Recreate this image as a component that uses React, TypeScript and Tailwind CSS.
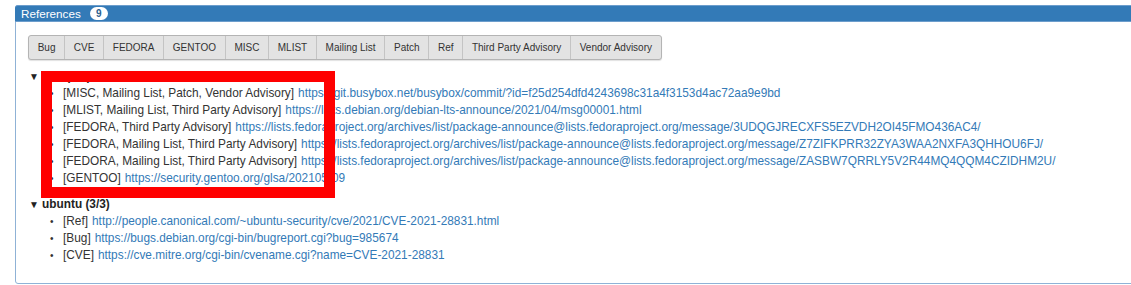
import React from "react";

const buttons = ["Bug", "CVE", "FEDORA", "GENTOO", "MISC", "MLIST", "Mailing List", "Patch", "Ref", "Third Party Advisory", "Vendor Advisory"];

const nvd: [string, string][] = [
  ["MISC, Mailing List, Patch, Vendor Advisory", "https://git.busybox.net/busybox/commit/?id=f25d254dfd4243698c31a4f3153d4ac72aa9e9bd"],
  ["MLIST, Mailing List, Third Party Advisory", "https://lists.debian.org/debian-lts-announce/2021/04/msg00001.html"],
  ["FEDORA, Third Party Advisory", "https://lists.fedoraproject.org/archives/list/package-announce@lists.fedoraproject.org/message/3UDQGJRECXFS5EZVDH2OI45FMO436AC4/"],
  ["FEDORA, Mailing List, Third Party Advisory", "https://lists.fedoraproject.org/archives/list/package-announce@lists.fedoraproject.org/message/Z7ZIFKPRR32ZYA3WAA2NXFA3QHHOU6FJ/"],
  ["FEDORA, Mailing List, Third Party Advisory", "https://lists.fedoraproject.org/archives/list/package-announce@lists.fedoraproject.org/message/ZASBW7QRRLY5V2R44MQ4QQM4CZIDHM2U/"],
  ["GENTOO", "https://security.gentoo.org/glsa/202105-09"],
];

const ubuntu: [string, string][] = [
  ["Ref", "http://people.canonical.com/~ubuntu-security/cve/2021/CVE-2021-28831.html"],
  ["Bug", "https://bugs.debian.org/cgi-bin/bugreport.cgi?bug=985674"],
  ["CVE", "https://cve.mitre.org/cgi-bin/cvename.cgi?name=CVE-2021-28831"],
];

function Group({ title, items }: { title: string; items: [string, string][] }) {
  return (
    <div className="flex flex-col">
      <div className="flex items-center h-[17px]">
        <span className="w-[13px] -ml-[3px] text-[10px] leading-none text-[#222]">▼</span>
        <span className="font-bold text-[#222]">{title}</span>
      </div>
      <ul className="flex flex-col">
        {items.map(([tag, url], i) => (
          <li key={i} className="flex items-center h-[17px] whitespace-nowrap">
            <span className="w-[31px] pl-[18px] text-[#333] text-[10px]">•</span>
            <span className="text-[#333]">[{tag}]</span>
            <span className="ml-[4px] text-[#337ab7]">{url}</span>
          </li>
        ))}
      </ul>
    </div>
  );
}

export default function App() {
  return (
    <div
      className="relative w-[1131px] h-[285px] bg-white overflow-hidden text-[11.85px] leading-[17px]"
      style={{ fontFamily: '"Liberation Sans", Arial, sans-serif' }}
    >
      <div className="ml-[15px] mt-[5px] w-[1130px] h-[279px] border border-[#8fb2d6] rounded-[3px] flex flex-col">
        <div className="h-[17px] -mt-px -mx-px bg-[#337ab7] border-y border-[#6c9dcc] flex items-center pl-[6px] text-white text-[11.7px] leading-none rounded-t-[3px]">
          <span>References</span>
          <span className="ml-[9px] w-[18px] h-[13px] rounded-full bg-white text-[#2d5f8f] text-[10px] font-bold flex items-center justify-center">9</span>
        </div>
        <div className="pl-[12px] pt-[13px] flex flex-col">
          <div className="flex h-[25px] w-fit rounded-[3px] border border-[#b4b4b4] bg-[#e3e3e3] shadow-[0_1px_1px_rgba(0,0,0,0.12)]">
            {buttons.map((b, i) => (
              <div
                key={b}
                className={`px-[8.7px] flex items-center text-[10px] text-[#333] leading-none ${i > 0 ? "border-l border-[#c4c4c4]" : ""}`}
              >
                {b}
              </div>
            ))}
          </div>
          <div className="pl-[4px] pt-[8px] flex flex-col gap-[9px]">
            <Group title="nvd (6/6)" items={nvd} />
            <Group title="ubuntu (3/3)" items={ubuntu} />
          </div>
        </div>
      </div>
      <div className="absolute left-[41px] top-[71px] w-[294px] h-[127px] border-[11px] border-[#ff0000]" />
    </div>
  );
}
